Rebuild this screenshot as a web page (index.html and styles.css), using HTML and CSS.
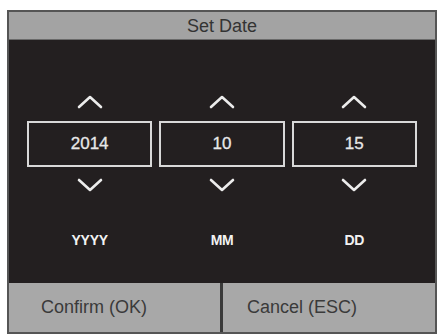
FILE: index.html
```html
<!DOCTYPE html>
<html>
<head>
<meta charset="utf-8">
<link rel="stylesheet" href="styles.css">
</head>
<body>
<div class="frame">
  <div class="title">Set Date</div>
  <div class="main">
    <div class="col">
      <svg class="arrow" viewBox="0 0 26 14"><polyline points="2,12 13,2 24,12"/></svg>
      <div class="box">2014</div>
      <svg class="arrow down" viewBox="0 0 26 14"><polyline points="2,2 13,12 24,2"/></svg>
      <div class="label">YYYY</div>
    </div>
    <div class="col">
      <svg class="arrow" viewBox="0 0 26 14"><polyline points="2,12 13,2 24,12"/></svg>
      <div class="box">10</div>
      <svg class="arrow down" viewBox="0 0 26 14"><polyline points="2,2 13,12 24,2"/></svg>
      <div class="label">MM</div>
    </div>
    <div class="col">
      <svg class="arrow" viewBox="0 0 26 14"><polyline points="2,12 13,2 24,12"/></svg>
      <div class="box">15</div>
      <svg class="arrow down" viewBox="0 0 26 14"><polyline points="2,2 13,12 24,2"/></svg>
      <div class="label">DD</div>
    </div>
  </div>
  <div class="buttons">
    <div class="btn ok">Confirm (OK)</div>
    <div class="btn esc">Cancel (ESC)</div>
  </div>
</div>
</body>
</html>
```
FILE: styles.css
```css
html, body {
  margin: 0;
  padding: 0;
  background: #ffffff;
}
body {
  font-family: "Liberation Sans", Arial, sans-serif;
}
.frame {
  margin: 10px 0 0 7px;
  width: 426px;
  border: 2px solid #555555;
  border-bottom: none;
  background: #231f20;
}
.title {
  height: 28px;
  background: #a3a3a3;
  color: #333333;
  font-size: 18px;
  line-height: 28px;
  text-align: center;
  box-sizing: border-box;
  border-bottom: 1px solid #6a6a6a;
}
.main {
  height: 243px;
  display: flex;
  gap: 7px;
  padding: 0 18px;
  box-sizing: border-box;
  background: #231f20;
}
.col {
  flex: 1;
  display: flex;
  flex-direction: column;
  align-items: center;
  padding-top: 55px;
}
.arrow {
  width: 26px;
  height: 14px;
  display: block;
}
.arrow polyline {
  fill: none;
  stroke: #ececec;
  stroke-width: 2.6;
  stroke-linecap: round;
  stroke-linejoin: round;
}
.box {
  margin-top: 12px;
  width: 100%;
  height: 46px;
  box-sizing: border-box;
  border: 2px solid #d8d8d8;
  color: #e8e8e8;
  font-size: 17px;
  line-height: 42px;
  text-align: center;
  -webkit-text-stroke: 0.3px #e8e8e8;
}
.arrow.down {
  margin-top: 11px;
}
.label {
  margin-top: 39px;
  color: #f2f2f2;
  font-size: 14px;
  font-weight: bold;
  line-height: 18px;
  letter-spacing: -0.3px;
}
.buttons {
  display: flex;
  height: 51px;
  border-bottom: 2px solid #555555;
  box-sizing: border-box;
}
.btn {
  background: #a8a8a8;
  color: #3a3a3a;
  font-size: 18px;
  line-height: 49px;
  box-sizing: border-box;
}
.ok {
  width: 214px;
  padding-left: 32px;
  border-right: 3px solid #3a3a3a;
}
.esc {
  flex: 1;
  padding-left: 24px;
}
```
